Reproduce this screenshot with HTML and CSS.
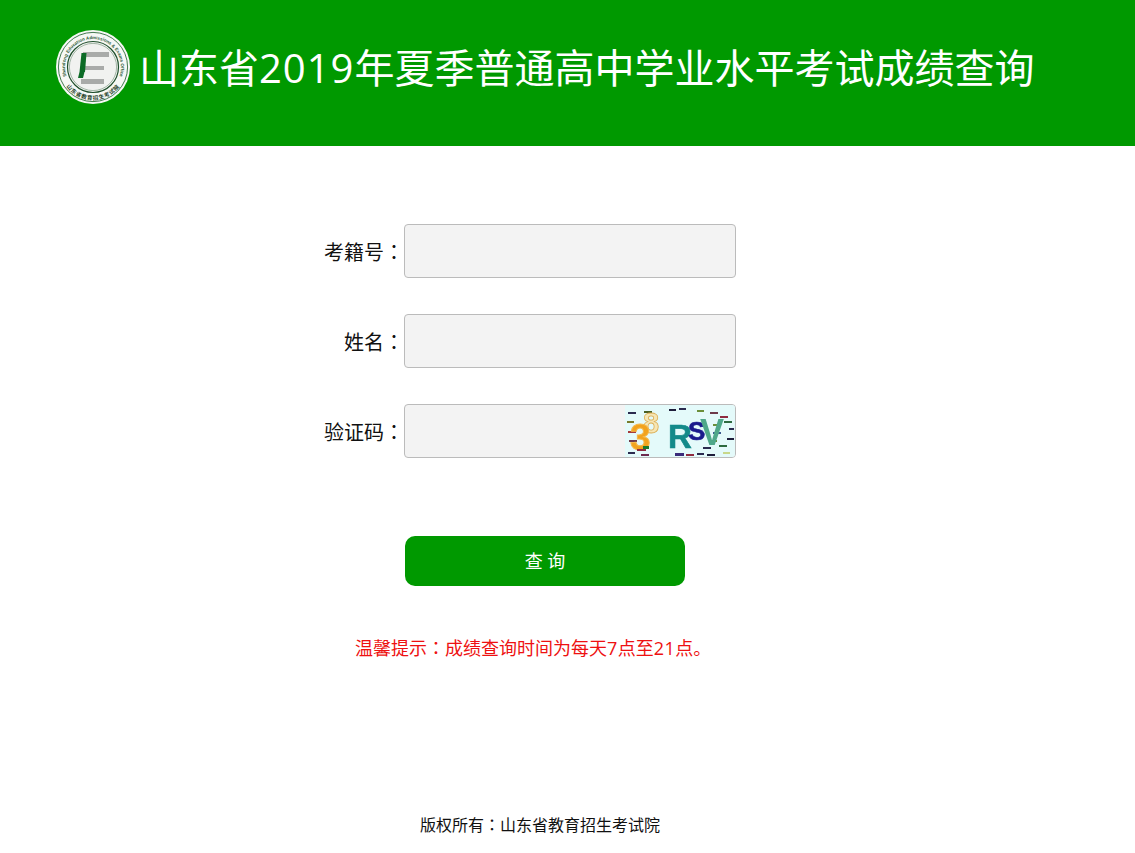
FILE: index.html
```html
<!DOCTYPE html>
<html lang="zh-CN">
<head>
<meta charset="utf-8">
<title>山东省2019年夏季普通高中学业水平考试成绩查询</title>
<link rel="stylesheet" href="styles.css">
</head>
<body>
<header class="banner">
  <svg class="logo" viewBox="0 0 74 74" width="74" height="74">
    <defs>
      <path id="arc-top" d="M12.7 51 A28 28 0 1 1 61.3 51"/>
      <path id="arc-bot" d="M8.4 53.5 A33 33 0 0 0 65.6 53.5"/>
    </defs>
    <circle cx="37" cy="37" r="37" fill="#f6f8f5"/>
    <circle cx="37" cy="37" r="34.6" fill="none" stroke="#2f6b3c" stroke-width="0.9"/>
    <circle cx="37" cy="37" r="25.5" fill="#f1f2f0" stroke="#1f4f2c" stroke-width="1.2"/>
    <circle cx="37" cy="37" r="23.6" fill="none" stroke="#6f8f76" stroke-width="0.6"/>
    <text class="logo-en"><textPath href="#arc-top" startOffset="50%" text-anchor="middle">Shandong Education Admissions &amp; Exams Office</textPath></text>
    <text class="logo-cn"><textPath href="#arc-bot" startOffset="50%" text-anchor="middle">山东省教育招生考试院</textPath></text>
    <rect x="27" y="22" width="26" height="5" fill="#a9aba9"/>
    <rect x="27" y="36" width="21" height="4" fill="#a9aba9"/>
    <rect x="25" y="49" width="23" height="5" fill="#a9aba9"/>
    <path d="M25.5 23H30.5L29 42H23.5Z" fill="#0c6b26"/>
    <path d="M23.5 42H28.5L27 48H22Z" fill="#0c6b26"/>
  </svg>
  <h1 class="banner-title">山东省<span class="num">2019</span>年夏季普通高中学业水平考试成绩查询</h1>
</header>

<main class="content">
  <form class="query-form">
    <div class="field">
      <label class="field-label">考籍号<span class="colon" lang="zh-Hant">：</span></label>
      <div class="field-box"></div>
    </div>
    <div class="field">
      <label class="field-label">姓名<span class="colon" lang="zh-Hant">：</span></label>
      <div class="field-box"></div>
    </div>
    <div class="field">
      <label class="field-label">验证码<span class="colon" lang="zh-Hant">：</span></label>
      <div class="field-box field-box-captcha">
        <svg class="captcha" viewBox="0 0 110 52" width="110" height="52">
          <rect width="110" height="52" fill="#e4fafa"/>
          <g class="captcha-art">
            <rect x="3" y="7" width="8" height="2" fill="#2b2b4f"/>
            <rect x="19" y="6" width="8" height="2" fill="#4a5f22"/>
            <rect x="44" y="4" width="7" height="2" fill="#1d1d3a"/>
            <rect x="54" y="3" width="7" height="2" fill="#2b2b4f"/>
            <rect x="72" y="5" width="7" height="2" fill="#6b8f3a"/>
            <rect x="85" y="7" width="8" height="2" fill="#6d3a4a"/>
            <rect x="95" y="11" width="8" height="2" fill="#8f2b40"/>
            <rect x="2" y="16" width="7" height="2" fill="#7a7a2b"/>
            <rect x="99" y="16" width="8" height="2" fill="#2d6a3f"/>
            <rect x="88" y="19" width="7" height="2" fill="#6b8f3a"/>
            <rect x="104" y="23" width="5" height="2" fill="#2b2b4f"/>
            <rect x="3" y="26" width="8" height="2" fill="#a53b3b"/>
            <rect x="88" y="27" width="8" height="2" fill="#3c5b8f"/>
            <rect x="102" y="33" width="7" height="2" fill="#1d1d3a"/>
            <rect x="4" y="35" width="8" height="2" fill="#6d3a4a"/>
            <rect x="84" y="35" width="8" height="2" fill="#6b8f3a"/>
            <rect x="94" y="40" width="8" height="2" fill="#2d6a3f"/>
            <rect x="78" y="42" width="8" height="2" fill="#2b2b4f"/>
            <text class="cap cap-8" x="18" y="28">8</text>
            <text class="cap cap-3" x="5" y="45">3</text>
            <text class="cap cap-r" x="43" y="43">R</text>
            <text class="cap cap-s" x="63" y="35">S</text>
            <text class="cap cap-v" x="75" y="40">V</text>
            <rect x="18" y="41" width="6" height="3" fill="#1a7a2d"/>
            <rect x="12" y="44" width="9" height="2" fill="#8f2b40"/>
            <rect x="3" y="47" width="7" height="2" fill="#2b2b4f"/>
            <rect x="16" y="49" width="8" height="2" fill="#6d2b4f"/>
            <rect x="50" y="48" width="9" height="3" fill="#3a2b7a"/>
            <rect x="61" y="49" width="8" height="2" fill="#8f2b40"/>
            <rect x="72" y="48" width="7" height="2" fill="#2b2b4f"/>
            <rect x="82" y="49" width="8" height="2" fill="#1d1d3a"/>
            <rect x="98" y="47" width="7" height="2" fill="#c8d88a"/>
          </g>
        </svg>
      </div>
    </div>
    <button class="submit" type="button">查 询</button>
  </form>
  <p class="tip">温馨提示<span class="colon" lang="zh-Hant">：</span>成绩查询时间为每天<span class="num">7</span>点至<span class="num">21</span>点。</p>
</main>

<footer class="copyright">版权所有<span class="colon" lang="zh-Hant">：</span>山东省教育招生考试院</footer>
</body>
</html>
```

FILE: styles.css
```css
* {
  box-sizing: border-box;
}

html,
body {
  margin: 0;
  padding: 0;
}

body {
  background: #fff;
  color: #111;
  font-family: "Open Sans", "Noto Sans CJK SC", sans-serif;
}

.colon {
  font-family: "Noto Sans CJK TC", sans-serif;
}

.num {
  letter-spacing: 0.025em;
}

.banner {
  display: flex;
  align-items: flex-start;
  gap: 9px;
  height: 146px;
  padding: 30px 0 0 56px;
  background: #009900;
}

.logo {
  flex: none;
}

.logo-en {
  font-family: "Liberation Sans", sans-serif;
  font-size: 4.5px;
  font-weight: 700;
  fill: #2c5a36;
}

.logo-cn {
  font-family: "Noto Sans CJK SC", sans-serif;
  font-size: 5.6px;
  font-weight: 700;
  letter-spacing: 0.6px;
  fill: #1f3f28;
}

.banner-title {
  margin: 10px 0 0;
  color: #fff;
  font-size: 40px;
  font-weight: 400;
  line-height: 56px;
  white-space: nowrap;
}

.content {
  height: 634px;
  padding-top: 78px;
}

.query-form {
  display: flex;
  flex-direction: column;
  gap: 36px;
  padding-left: 304px;
}

.field {
  display: flex;
  align-items: center;
  height: 54px;
}

.field-label {
  width: 100px;
  padding-top: 3px;
  font-size: 20px;
  line-height: 28px;
  text-align: right;
  white-space: nowrap;
}

.field-box {
  display: flex;
  justify-content: flex-end;
  width: 332px;
  height: 54px;
  overflow: hidden;
  border: 1px solid #bbb;
  border-radius: 4px;
  background: #f3f3f3;
}

.captcha {
  display: block;
  flex: none;
}

.captcha-art {
  filter: blur(0.45px);
}

.cap {
  font-family: "Liberation Sans", sans-serif;
  font-weight: 700;
}

.cap-3 {
  font-size: 37px;
  fill: #f2a31e;
  stroke: #f5b84a;
  stroke-width: 1;
}

.cap-8 {
  font-size: 29px;
  fill: #f6e6b4;
  stroke: #dcae55;
  stroke-width: 0.8;
}

.cap-r {
  font-size: 33px;
  fill: #138a8a;
  stroke: #138a8a;
  stroke-width: 0.6;
}

.cap-s {
  font-size: 26px;
  fill: #1a1a8c;
  stroke: #1a1a8c;
  stroke-width: 0.6;
}

.cap-v {
  font-size: 36px;
  fill: #4fa88a;
}

.submit {
  display: block;
  width: 280px;
  height: 50px;
  margin: 42px 0 0 101px;
  padding: 0 0 2px;
  border: 0;
  border-radius: 10px;
  background: #009900;
  color: #fff;
  font-family: inherit;
  font-size: 18px;
}

.tip {
  width: 350px;
  margin: 48px 0 0 355px;
  color: #e11;
  font-size: 18px;
  line-height: 26px;
  white-space: nowrap;
}

.copyright {
  margin-top: 32px;
  padding-right: 55px;
  color: #111;
  font-size: 16px;
  line-height: 24px;
  text-align: center;
}
```
